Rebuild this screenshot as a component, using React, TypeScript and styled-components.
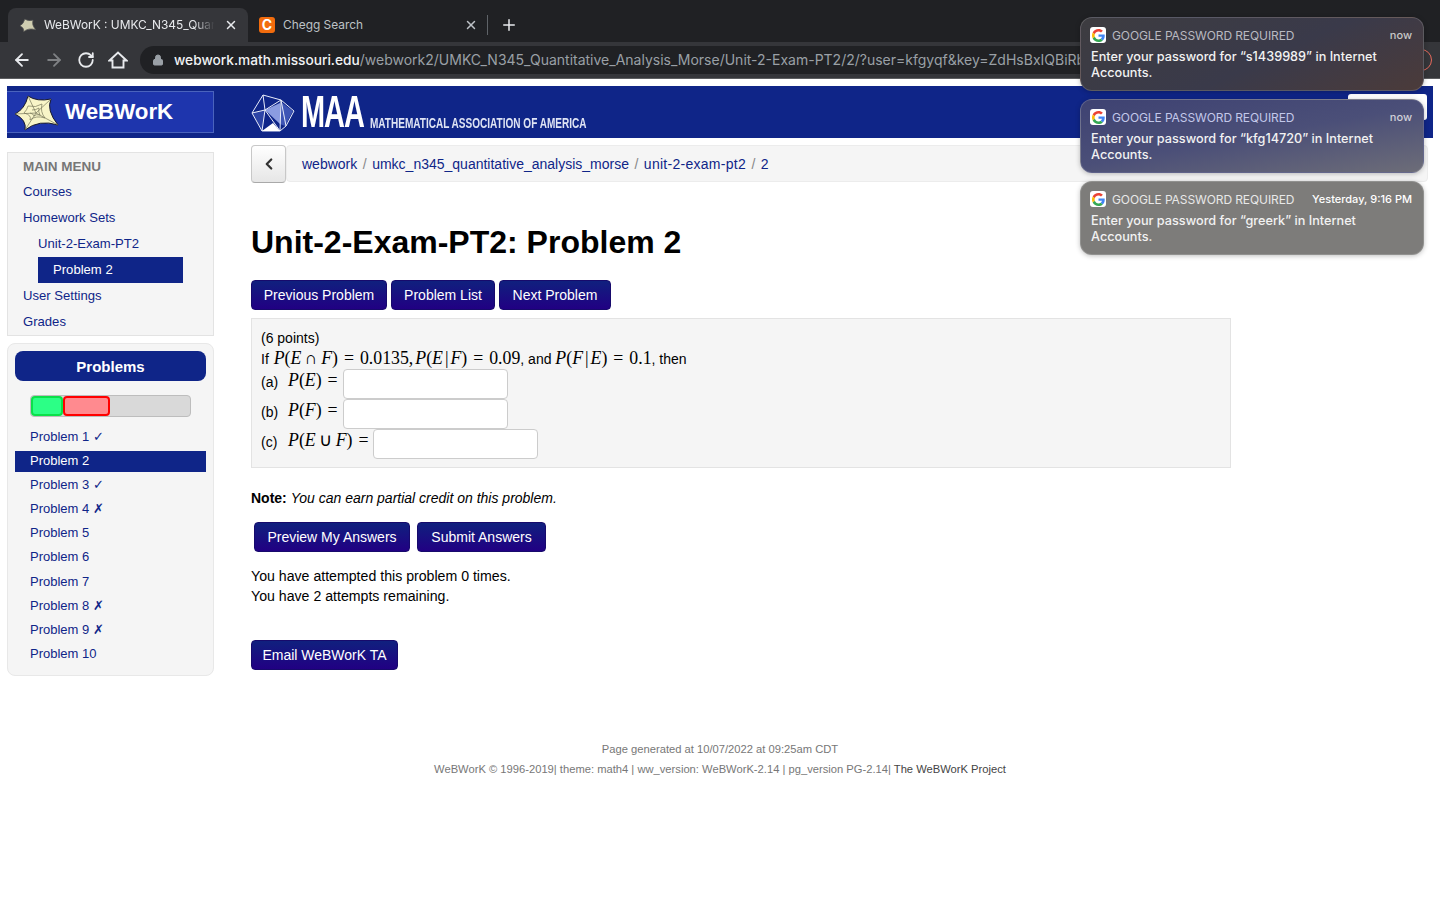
import React from 'react'
import styled, { createGlobalStyle } from 'styled-components'
import { ArrowLeft, ArrowRight, RotateCw, Lock, X, Plus, ChevronLeft } from 'lucide-react'

const GlobalStyle = createGlobalStyle`
    html, body {
        margin: 0;
        padding: 0;
        background: #fff;
    }
    body {
        font-family: "Liberation Sans", Arial, sans-serif;
        font-size: 14px;
        color: #000;
        overflow: hidden;
    }
    * { box-sizing: border-box; }
`;

const Page = styled.div`
    position: relative;
    width: 1440px;
    height: 900px;
    overflow: hidden;
`;

/* browser chrome */
const TabStrip = styled.div`
    display: flex;
    align-items: flex-end;
    height: 42px;
    padding-left: 8px;
    background: #202124;
    font-family: Inter, "Liberation Sans", sans-serif;
`;

const Tab = styled.div<{ $active?: boolean }>`
    display: flex;
    align-items: center;
    justify-content: space-between;
    width: 240px;
    height: 34px;
    padding: 0 10px 1px ${p => (p.$active ? 12 : 11)}px;
    border-radius: 8px 8px 0 0;
    background: ${p => (p.$active ? '#35363a' : 'transparent')};
    color: ${p => (p.$active ? '#e8eaed' : '#bdc1c6')};
    font-size: 11.9px;
`;

const TabTitle = styled.span<{ $fade?: boolean }>`
    flex: ${p => (p.$fade ? 'none' : 1)};
    margin-left: 8px;
    margin-right: auto;
    white-space: nowrap;
    ${p => p.$fade && `-webkit-mask-image: linear-gradient(90deg, #000 86%, transparent 98%);`}
`;

const Favicon = styled.span`
    display: flex;
    align-items: center;
    justify-content: center;
    width: 16px;
    height: 16px;
    border-radius: 3px;
    background: #f26c0d;
    color: #fff;
    font-size: 14px;
    font-weight: 700;
`;

const TabDivider = styled.span`
    width: 1px;
    height: 20px;
    margin: 0 12px 7px -1px;
    background: #5f6368;
`;

const NewTab = styled.span`
    display: flex;
    margin-bottom: 8px;
    color: #e8eaed;
`;

const Toolbar = styled.div`
    display: flex;
    align-items: center;
    gap: 12px;
    height: 37px;
    padding: 0 8px 0 12px;
    background: #35363a;
    border-bottom: 1px solid #5c5d60;
`;

const NavIcon = styled.span<{ $dim?: boolean }>`
    display: flex;
    justify-content: center;
    width: 20px;
    color: ${p => (p.$dim ? '#7f8184' : '#e8eaed')};
`;

const AddressBar = styled.div`
    display: flex;
    flex: 1;
    align-items: center;
    min-width: 0;
    height: 28px;
    padding: 0 0 1px 12px;
    border-radius: 14px;
    background: #202124;
    font-family: Inter, "Liberation Sans", sans-serif;
    font-size: 14px;
    white-space: nowrap;
    overflow: hidden;
    color: #9aa0a6;
    b {
        color: #f1f3f4;
        font-size: 13.7px;
        font-weight: 500;
    }
`;

const UrlText = styled.span`
    margin-left: 10px;
`;

const Avatar = styled.span`
    width: 22px;
    height: 22px;
    flex-shrink: 0;
    border: 1px solid #e5695c;
    border-radius: 50%;
`;

/* site */
const Site = styled.div`
    padding: 7px 7px 0;
`;

const Masthead = styled.header`
    position: relative;
    display: flex;
    align-items: center;
    height: 52px;
    background: #0f2588;
`;

const Brand = styled.div`
    display: flex;
    align-items: center;
    width: 207px;
    height: 42px;
    padding-left: 8px;
    background: #1e35ad;
    border: 1px solid #4a63bd;
    border-left: 0;
    color: #fff;
    font-size: 22.3px;
    font-weight: 700;
`;

const BrandName = styled.span`
    margin-left: 6px;
`;

const Maa = styled.div`
    display: flex;
    align-items: flex-end;
    margin-left: 37px;
    height: 40px;
    color: #fff;
    font-weight: 700;
    white-space: nowrap;
`;

const MaaMark = styled.span`
    display: inline-block;
    width: 62px;
    margin-left: 6px;
    font-size: 43.5px;
    line-height: 40px;
    letter-spacing: -1.5px;
    transform: scaleX(0.665);
    transform-origin: left bottom;
`;

const MaaName = styled.span`
    display: inline-block;
    width: 216px;
    margin-left: 7px;
    font-size: 14px;
    line-height: 18px;
    color: #dfe4f4;
    transform: scaleX(0.717);
    transform-origin: left bottom;
`;

const HeadButton = styled.span`
    position: absolute;
    top: 8px;
    right: 6px;
    width: 79px;
    height: 26px;
    border-radius: 3px;
    background: #fff;
`;

const Columns = styled.div`
    display: flex;
    align-items: flex-start;
`;

const Sidebar = styled.aside`
    display: flex;
    flex-direction: column;
    gap: 7px;
    width: 207px;
    margin-top: 14px;
    flex-shrink: 0;
`;

const MenuPanel = styled.nav`
    height: 184px;
    padding-top: 4px;
    background: #f5f5f5;
    border: 1px solid #e3e3e3;
`;

const MenuHeading = styled.div`
    height: 22px;
    padding-left: 15px;
    color: #777;
    font-size: 13.5px;
    line-height: 19px;
    font-weight: 700;
`;

const MenuLink = styled.a<{ $indent?: number; $active?: boolean }>`
    display: block;
    height: 26px;
    line-height: 26px;
    margin-left: ${p => 15 + (p.$indent || 0)}px;
    width: ${p => (p.$active ? '145px' : 'auto')};
    padding-left: ${p => (p.$active ? '15px' : '0')};
    background: ${p => (p.$active ? '#0f2588' : 'transparent')};
    color: ${p => (p.$active ? '#fff' : '#0f2588')};
    font-size: 13.1px;
`;

const ProblemsPanel = styled.section`
    height: 333px;
    padding: 7px 7px 0;
    background: #f5f5f5;
    border: 1px solid #e8e8e8;
    border-radius: 8px;
`;

const ProblemsTitle = styled.div`
    height: 30px;
    padding-top: 1px;
    border-radius: 8px;
    background: #0f2588;
    color: #fff;
    font-size: 15px;
    font-weight: 700;
    line-height: 30px;
    text-align: center;
`;

const ProgressTrack = styled.div`
    display: flex;
    width: 161px;
    height: 22px;
    margin: 14px 0 10px 15px;
    background: #d9d9d9;
    border: 1px solid #bdbdbd;
    border-radius: 4px;
`;

const ProgressPiece = styled.span<{ $w: number; $fill: string; $line: string }>`
    width: ${p => p.$w}px;
    height: 20px;
    background: ${p => p.$fill};
    border: 2px solid ${p => p.$line};
    border-radius: 4px;
`;

const ProblemList = styled.div`
    display: flex;
    flex-direction: column;
    gap: 3.1px;
`;

const ProblemRow = styled.a<{ $active?: boolean }>`
    display: block;
    height: 21px;
    line-height: 19px;
    padding-left: 15px;
    color: ${p => (p.$active ? '#fff' : '#0f2588')};
    font-size: 13px;
    background: ${p => (p.$active ? '#0f2588' : 'transparent')};
`;

const Content = styled.main`
    width: 1177px;
    margin: 7px 0 0 37px;
`;

const BreadRow = styled.div`
    display: flex;
    height: 38px;
`;

const BackButton = styled.button`
    display: flex;
    align-items: center;
    justify-content: center;
    width: 35px;
    height: 38px;
    padding: 0;
    background: linear-gradient(#fff, #e6e6e6);
    border: 1px solid #c8c8c8;
    border-bottom-color: #a9a9a9;
    border-radius: 4px;
    color: #333;
`;

const Crumbs = styled.div`
    display: flex;
    align-items: center;
    flex: 1;
    height: 37px;
    padding-left: 15px;
    background: #f5f5f5;
    border: 1px solid #ececec;
    border-radius: 4px;
    font-size: 14px;
    a { color: #0f2588; }
    a:nth-of-type(3) { letter-spacing: 0.27px; }
    span {
        margin: 0 5.5px;
        color: #888;
    }
`;

const Title = styled.h1`
    margin: 39px 0 17px;
    height: 41px;
    font-size: 32px;
    line-height: 41px;
    font-weight: 700;
`;

const ButtonRow = styled.div<{ $indent?: number; $gap?: number }>`
    display: flex;
    gap: ${p => p.$gap ?? 4}px;
    margin-left: ${p => p.$indent || 0}px;
`;

const ActionButton = styled.button<{ $w: number }>`
    width: ${p => p.$w}px;
    height: 30px;
    padding: 0;
    background: linear-gradient(#10207e, #210083);
    border: 1px solid #170a6c;
    border-radius: 4px;
    color: #fff;
    font-family: inherit;
    font-size: 14px;
`;

const ProblemBox = styled.section`
    width: 980px;
    height: 150px;
    margin-top: 8px;
    padding: 9px 9px 0;
    background: #f5f5f5;
    border: 1px solid #e3e3e3;
    line-height: 20px;
`;

const MathText = styled.span`
    font-family: "Liberation Serif", "Times New Roman", serif;
    font-size: 17.8px;
    word-spacing: 1.5px;
    i { font-style: italic; }
`;

const StatementLine = styled.div`
    ${MathText}:first-of-type {
        margin-left: 1px;
    }
`;

const MathOp = styled.span<{ $space: number }>`
    margin: 0 ${p => p.$space}px;
`;

const MathSep = styled.span`
    margin-right: 2px;
`;

const PartRow = styled.div`
    display: flex;
    align-items: center;
    height: 30px;
    ${MathText} {
        margin-top: -8px;
    }
`;

const PartLabel = styled.span`
    width: 27px;
    margin-top: -5px;
`;

const Answer = styled.input`
    width: 165px;
    height: 30px;
    margin: -1px 0 0 5px;
    background: #fff;
    border: 1px solid #ccc;
    border-radius: 4px;
`;

const Note = styled.p`
    margin: 22px 0 16px;
    line-height: 16px;
`;

const Attempts = styled.p`
    margin: 14px 0 34px;
    font-size: 14.15px;
    line-height: 20px;
`;

const Footer = styled.footer`
    margin-top: 63px;
    color: #777;
    font-size: 11.2px;
    line-height: 20px;
    text-align: center;
    a { color: #444; }
`;

/* macOS notifications */
const Notifications = styled.div`
    position: absolute;
    top: 17px;
    left: 1080px;
    display: flex;
    flex-direction: column;
    gap: 8px;
    width: 344px;
    font-family: Inter, "Liberation Sans", sans-serif;
`;

const Toast = styled.div<{ $bg: string; $head: string; $time: string }>`
    height: 74px;
    padding: 9px 11px 0 9px;
    border-radius: 12px;
    background: ${p => p.$bg};
    border: 1px solid rgba(255, 255, 255, 0.16);
    box-shadow: 0 1px 5px rgba(0, 0, 0, 0.25);
    color: #f2f2f2;
    --head: ${p => p.$head};
    --time: ${p => p.$time};
`;

const ToastHead = styled.div`
    display: flex;
    align-items: center;
    height: 16px;
    font-size: 12px;
    color: var(--head);
`;

const GoogleTile = styled.span`
    display: flex;
    align-items: center;
    justify-content: center;
    width: 16px;
    height: 16px;
    margin-right: 6px;
    border-radius: 3px;
    background: #fff;
`;

const ToastApp = styled.span`
    flex: 1;
    letter-spacing: -0.1px;
`;

const ToastTime = styled.span`
    color: var(--time);
    font-size: 11px;
    font-weight: 500;
`;

const ToastBody = styled.div`
    margin: 6px 0 0 1px;
    font-size: 12.7px;
    font-weight: 500;
    line-height: 16px;
`;

const StarLogo = () => (
    <svg width="44" height="38" viewBox="0 0 44 38" fill="none">
        <path d="M0 21 Q10 16 13 3 Q22 9 36 6 Q31 17 43 32 Q24 26 10 37 Q12 27 0 21 Z" fill="#f8f5c8" stroke="#1c1c2c" strokeWidth="1" />
        <path d="M13 3 L21 20 L36 6 M0 21 L21 20 L43 32 M21 20 L10 37 M13 13 Q21 15 27 11 Q25 19 30 25 Q21 22 15 27 Q17 22 9 20 Q12 17 13 13 M17 17 Q21 17 24 15 Q23 19 25 22 Q21 21 19 23 Q19 21 15 20" stroke="#77775a" strokeWidth="0.7" />
    </svg>
);

const MaaLogo = () => (
    <svg width="44" height="38" viewBox="0 0 44 38" fill="none" stroke="#e8ecfa" strokeWidth="1">
        <path d="M14 16 L29 9 L29 30 Z" fill="#8b9ce0" stroke="none" />
        <path d="M1 19 L14 16 L11 36 Z" fill="#2d44a6" stroke="none" />
        <path d="M30 8 L42 17 L34 32 L29 30 Z" fill="#3e55b5" stroke="none" />
        <path d="M1 19 L12 1 L30 6 L43 17 L35 32 L29 37 L11 37 Z" />
        <path d="M12 1 L14 16 L30 6 M14 16 L1 19 M14 16 L29 37 M14 16 L11 37 M30 6 L29 37 M30 6 L35 32" />
        <path d="M11 37 L22 29 L29 37 Z" fill="#fff" stroke="none" />
    </svg>
);

const HomeIcon = () => (
    <svg width="20" height="20" viewBox="0 0 20 20" fill="none" stroke="currentColor" strokeWidth="1.9" strokeLinejoin="miter">
        <path d="M1.500 10.500 L10 2.500 L18.500 10.500 H15.500 V17.500 H4.500 V10.500 Z" />
    </svg>
);

const GoogleG = () => (
    <svg width="13" height="13" viewBox="0 0 48 48">
        <path fill="#EA4335" d="M24 9.5c3.5 0 6.700 1.200 9.200 3.600l6.900-6.900C35.900 2.400 30.400 0 24 0 14.600 0 6.500 5.400 2.600 13.200l8 6.200C12.500 13.700 17.800 9.500 24 9.500z" />
        <path fill="#4285F4" d="M47 24.500c0-1.600-.1-3.100-.4-4.500H24v9h12.900c-.6 3-2.200 5.500-4.700 7.200l7.700 6C44.400 37.900 47 31.800 47 24.500z" />
        <path fill="#FBBC05" d="M10.500 28.600c-.5-1.400-.8-3-.8-4.600s.3-3.200.8-4.600l-8-6.200C.9 16.500 0 20.100 0 24s.9 7.500 2.600 10.800l7.900-6.200z" />
        <path fill="#34A853" d="M24 48c6.500 0 11.900-2.100 15.900-5.800l-7.700-6c-2.100 1.400-4.900 2.300-8.200 2.300-6.200 0-11.500-4.200-13.400-9.900l-8 6.200C6.500 42.600 14.600 48 24 48z" />
    </svg>
);

const menu = [
    { label: 'Courses' },
    { label: 'Homework Sets' },
    { label: 'Unit-2-Exam-PT2', indent: 15 },
    { label: 'Problem 2', indent: 15, active: true },
    { label: 'User Settings' },
    { label: 'Grades' },
];

const problems = [
    'Problem 1 ✓', 'Problem 2', 'Problem 3 ✓', 'Problem 4 ✗', 'Problem 5',
    'Problem 6', 'Problem 7', 'Problem 8 ✗', 'Problem 9 ✗', 'Problem 10',
];

const toasts = [
    {
        bg: 'linear-gradient(155deg, #3d3c40 0%, #3a3a4a 55%, #4b3b3a 100%)',
        head: '#b9b9c0',
        timeColor: '#c8c8c8',
        time: 'now',
        body: 'Enter your password for “s1439989” in Internet Accounts.',
    },
    {
        bg: 'linear-gradient(170deg, #3e4272 0%, #4b4f78 50%, #6d6d78 100%)',
        head: '#c3c8ea',
        timeColor: '#d0d0d8',
        time: 'now',
        body: 'Enter your password for “kfg14720” in Internet Accounts.',
    },
    {
        bg: '#7d7c7a',
        head: '#e8e8e8',
        timeColor: '#fff',
        time: 'Yesterday, 9:16 PM',
        body: 'Enter your password for “greerk” in Internet Accounts.',
    },
];

export default function App() {
    return (
        <Page>
            <GlobalStyle />
            <TabStrip>
                <Tab $active>
                    <svg width="16" height="16" viewBox="0 0 44 38" fill="#cfcdb0">
                        <path d="M0 21 Q10 16 13 3 Q22 9 36 6 Q31 17 43 32 Q24 26 10 37 Q12 27 0 21 Z" stroke="#555" strokeWidth="2" />
                    </svg>
                    <TabTitle $fade>WeBWorK : UMKC_N345_Quan</TabTitle>
                    <X size={14} strokeWidth={2.5} />
                </Tab>
                <Tab>
                    <Favicon>C</Favicon>
                    <TabTitle>Chegg Search</TabTitle>
                    <X size={14} strokeWidth={2.5} />
                </Tab>
                <TabDivider />
                <NewTab><Plus size={18} strokeWidth={2} /></NewTab>
            </TabStrip>
            <Toolbar>
                <NavIcon><ArrowLeft size={20} strokeWidth={2.2} /></NavIcon>
                <NavIcon $dim><ArrowRight size={20} strokeWidth={2.2} /></NavIcon>
                <NavIcon><RotateCw size={18} strokeWidth={2.4} /></NavIcon>
                <NavIcon><HomeIcon /></NavIcon>
                <AddressBar>
                    <Lock size={12} fill="#9aa0a6" />
                    <UrlText>
                        <b>webwork.math.missouri.edu</b>/webwork2/UMKC_N345_Quantitative_Analysis_Morse/Unit-2-Exam-PT2/2/?user=kfgyqf&amp;key=ZdHsBxIQBiRb
                    </UrlText>
                </AddressBar>
                <Avatar />
            </Toolbar>
            <Site>
                <Masthead>
                    <Brand>
                        <StarLogo />
                        <BrandName>WeBWorK</BrandName>
                    </Brand>
                    <Maa>
                        <MaaLogo />
                        <MaaMark>MAA</MaaMark>
                        <MaaName>MATHEMATICAL ASSOCIATION OF AMERICA</MaaName>
                    </Maa>
                    <HeadButton />
                </Masthead>
                <Columns>
                    <Sidebar>
                        <MenuPanel>
                            <MenuHeading>MAIN MENU</MenuHeading>
                            {menu.map(m => (
                                <MenuLink key={m.label} $indent={m.indent} $active={m.active}>{m.label}</MenuLink>
                            ))}
                        </MenuPanel>
                        <ProblemsPanel>
                            <ProblemsTitle>Problems</ProblemsTitle>
                            <ProgressTrack>
                                <ProgressPiece $w={32} $fill="#2cff86" $line="#0be04a" />
                                <ProgressPiece $w={47} $fill="#ff8a8f" $line="#f00" />
                            </ProgressTrack>
                            <ProblemList>
                                {problems.map((p, i) => (
                                    <ProblemRow key={p} $active={i === 1}>{p}</ProblemRow>
                                ))}
                            </ProblemList>
                        </ProblemsPanel>
                    </Sidebar>
                    <Content>
                        <BreadRow>
                            <BackButton><ChevronLeft size={18} strokeWidth={3} /></BackButton>
                            <Crumbs>
                                <a>webwork</a><span>/</span>
                                <a>umkc_n345_quantitative_analysis_morse</a><span>/</span>
                                <a>unit-2-exam-pt2</a><span>/</span>
                                <a>2</a>
                            </Crumbs>
                        </BreadRow>
                        <Title>Unit-2-Exam-PT2: Problem 2</Title>
                        <ButtonRow>
                            <ActionButton $w={136}>Previous Problem</ActionButton>
                            <ActionButton $w={104}>Problem List</ActionButton>
                            <ActionButton $w={112}>Next Problem</ActionButton>
                        </ButtonRow>
                        <ProblemBox>
                            <div>(6 points)</div>
                            <StatementLine>
                                If <MathText><i>P</i>(<i>E</i><MathOp $space={3.5}>∩</MathOp><i>F</i>) = 0.0135,<MathSep /><i>P</i>(<i>E</i><MathOp $space={2}>|</MathOp><i>F</i>) = 0.09</MathText>, and <MathText><i>P</i>(<i>F</i><MathOp $space={2}>|</MathOp><i>E</i>) = 0.1</MathText>, then
                            </StatementLine>
                            <PartRow>
                                <PartLabel>(a)</PartLabel>
                                <MathText><i>P</i>(<i>E</i>) =</MathText>
                                <Answer />
                            </PartRow>
                            <PartRow>
                                <PartLabel>(b)</PartLabel>
                                <MathText><i>P</i>(<i>F</i>) =</MathText>
                                <Answer />
                            </PartRow>
                            <PartRow>
                                <PartLabel>(c)</PartLabel>
                                <MathText><i>P</i>(<i>E</i><MathOp $space={3.5}>∪</MathOp><i>F</i>) =</MathText>
                                <Answer />
                            </PartRow>
                        </ProblemBox>
                        <Note><b>Note:</b> <i>You can earn partial credit on this problem.</i></Note>
                        <ButtonRow $indent={3} $gap={7}>
                            <ActionButton $w={156}>Preview My Answers</ActionButton>
                            <ActionButton $w={129}>Submit Answers</ActionButton>
                        </ButtonRow>
                        <Attempts>
                            You have attempted this problem 0 times.<br />
                            You have 2 attempts remaining.
                        </Attempts>
                        <ActionButton $w={147}>Email WeBWorK TA</ActionButton>
                    </Content>
                </Columns>
                <Footer>
                    <div>Page generated at 10/07/2022 at 09:25am CDT</div>
                    <div>WeBWorK © 1996-2019| theme: math4 | ww_version: WeBWorK-2.14 | pg_version PG-2.14| <a>The WeBWorK Project</a></div>
                </Footer>
            </Site>
            <Notifications>
                {toasts.map(t => (
                    <Toast key={t.body} $bg={t.bg} $head={t.head} $time={t.timeColor}>
                        <ToastHead>
                            <GoogleTile><GoogleG /></GoogleTile>
                            <ToastApp>GOOGLE PASSWORD REQUIRED</ToastApp>
                            <ToastTime>{t.time}</ToastTime>
                        </ToastHead>
                        <ToastBody>{t.body}</ToastBody>
                    </Toast>
                ))}
            </Notifications>
        </Page>
    )
}
